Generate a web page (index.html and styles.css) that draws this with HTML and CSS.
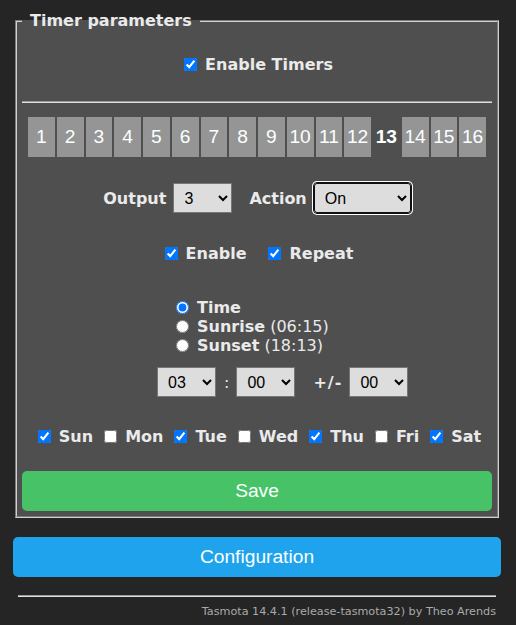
FILE: index.html
```html
<!DOCTYPE html>
<html lang="en">
<head>
<meta charset="utf-8">
<title>Timers</title>
<link rel="stylesheet" href="styles.css">
</head>
<body>
<div class="wrap">
  <fieldset class="panel">
    <legend class="legend">Timer parameters</legend>
    <label class="row enable-timers"><input type="checkbox" checked><b>Enable Timers</b></label>
    <hr class="sep">
    <div class="tabs">
      <button type="button" class="tab">1</button>
      <button type="button" class="tab">2</button>
      <button type="button" class="tab">3</button>
      <button type="button" class="tab">4</button>
      <button type="button" class="tab">5</button>
      <button type="button" class="tab">6</button>
      <button type="button" class="tab">7</button>
      <button type="button" class="tab">8</button>
      <button type="button" class="tab">9</button>
      <button type="button" class="tab">10</button>
      <button type="button" class="tab">11</button>
      <button type="button" class="tab">12</button>
      <button type="button" class="tab tab-active">13</button>
      <button type="button" class="tab">14</button>
      <button type="button" class="tab">15</button>
      <button type="button" class="tab">16</button>
    </div>
    <div class="row output-row">
      <b>Output</b>
      <select class="sel sel-out"><option>3</option></select>
      <b class="action-label">Action</b>
      <select class="sel sel-act"><option>On</option></select>
    </div>
    <div class="row opts">
      <label class="chk"><input type="checkbox" checked><b>Enable</b></label>
      <label class="chk"><input type="checkbox" checked><b>Repeat</b></label>
    </div>
    <div class="mode">
      <label class="radio"><input type="radio" name="mode" checked><b>Time</b></label>
      <label class="radio"><input type="radio" name="mode"><span><b>Sunrise</b> (06:15)</span></label>
      <label class="radio"><input type="radio" name="mode"><span><b>Sunset</b> (18:13)</span></label>
    </div>
    <div class="time-row">
      <select class="sel sel-t"><option>03</option></select>
      <span class="colon">:</span>
      <select class="sel sel-t"><option>00</option></select>
      <b class="pm">+/-</b>
      <select class="sel sel-t"><option>00</option></select>
    </div>
    <div class="row days">
      <label class="chk"><input type="checkbox" checked><b>Sun</b></label>
      <label class="chk"><input type="checkbox"><b>Mon</b></label>
      <label class="chk"><input type="checkbox" checked><b>Tue</b></label>
      <label class="chk"><input type="checkbox"><b>Wed</b></label>
      <label class="chk"><input type="checkbox" checked><b>Thu</b></label>
      <label class="chk"><input type="checkbox"><b>Fri</b></label>
      <label class="chk"><input type="checkbox" checked><b>Sat</b></label>
    </div>
    <button type="button" class="btn btn-save">Save</button>
  </fieldset>
  <button type="button" class="btn btn-config">Configuration</button>
  <div class="foot">
    <hr class="foot-hr">
    <span class="ver">Tasmota 14.4.1 (release-tasmota32) by Theo Arends</span>
  </div>
</div>
</body>
</html>
```
FILE: styles.css
```css
html, body {
  margin: 0;
  padding: 0;
  background: #252525;
}
body {
  font-family: "DejaVu Sans", Verdana, sans-serif;
  font-size: 16px;
  line-height: 19px;
  color: #eaeaea;
}
.wrap {
  width: 488px;
  margin-left: 13px;
  padding-top: 11px;
}
.panel {
  margin: 0 2px;
  padding: 0 5px 5px;
  border: 2px groove #d0d0d0;
  background: #4f4f4f;
  min-width: 0;
}
.legend {
  padding: 0 8px;
  font-weight: bold;
  line-height: 19px;
}
.row {
  display: flex;
  justify-content: center;
  align-items: center;
}
input[type="checkbox"], input[type="radio"] {
  width: 13px;
  height: 13px;
  margin: 0;
  flex: none;
}
.enable-timers {
  margin-top: 25px;
  height: 19px;
  gap: 8px;
  padding-left: 3px;
}
.sep {
  margin: 27px 0 0;
  border: 0;
  border-top: 1px solid #9a9a9a;
  border-bottom: 1px solid #e0e0e0;
  height: 0;
}
.tabs {
  display: flex;
  width: 460px;
  margin: 13px auto 0;
}
.tab {
  flex: 1 1 0;
  min-width: 0;
  height: 42px;
  padding: 0;
  border: 1px solid #4f4f4f;
  border-radius: 0;
  background: #959595;
  color: #faffff;
  font-family: "Liberation Sans", Arial, sans-serif;
  font-size: 19.2px;
  line-height: 40px;
}
.tab-active {
  background: #4f4f4f;
  font-weight: bold;
}
.sel {
  height: 30px;
  margin: 0;
  padding: 0 0 0 6px;
  border: 1px solid #767676;
  border-radius: 0;
  background-color: #dddddd;
  color: #000;
  font-family: "Liberation Sans", Arial, sans-serif;
  font-size: 16px;
}
.output-row {
  margin-top: 25px;
  height: 30px;
}
.sel-out {
  width: 59px;
  margin-left: 7px;
}
.action-label {
  margin-left: 17px;
}
.sel-act {
  width: 97px;
  margin-left: 7px;
  border: 1px solid #101010;
  outline: 1px solid #101010;
  box-shadow: 0 0 0 2px #ffffff;
  border-radius: 3px;
}
.opts {
  margin-top: 31px;
  height: 19px;
  gap: 22px;
  padding-left: 4px;
}
.chk {
  display: flex;
  align-items: center;
  gap: 8px;
}
.mode {
  margin-top: 35px;
  padding-left: 154px;
  display: flex;
  flex-direction: column;
}
.radio {
  display: flex;
  align-items: center;
  gap: 8px;
  height: 19px;
}
.time-row {
  display: flex;
  align-items: center;
  margin-top: 12px;
  padding-left: 135px;
  height: 30px;
}
.sel-t {
  width: 59px;
}
.colon {
  margin: 0 7px 0 8px;
}
.pm {
  display: inline-block;
  width: 31px;
  text-align: center;
  letter-spacing: 1px;
  margin: 0 6px 0 17px;
}
.days {
  margin-top: 30px;
  height: 19px;
  gap: 11px;
  padding-left: 5px;
}
.btn {
  display: block;
  width: 100%;
  height: 40px;
  padding: 0;
  border: 0;
  border-radius: 5px;
  color: #faffff;
  font-family: "Liberation Sans", Arial, sans-serif;
  font-size: 19.2px;
  line-height: 40px;
}
.btn-save {
  margin-top: 25px;
  background: #47c266;
}
.btn-config {
  margin-top: 19px;
  background: #1fa3ec;
}
.foot {
  text-align: right;
  font-size: 11.2px;
  line-height: 13px;
  padding: 0 5px;
}
.foot-hr {
  margin: 18px 0 8px;
  border: 0;
  border-top: 1px solid #9a9a9a;
  border-bottom: 1px solid #e0e0e0;
  height: 0;
}
.ver {
  color: #aaaaaa;
}
```
